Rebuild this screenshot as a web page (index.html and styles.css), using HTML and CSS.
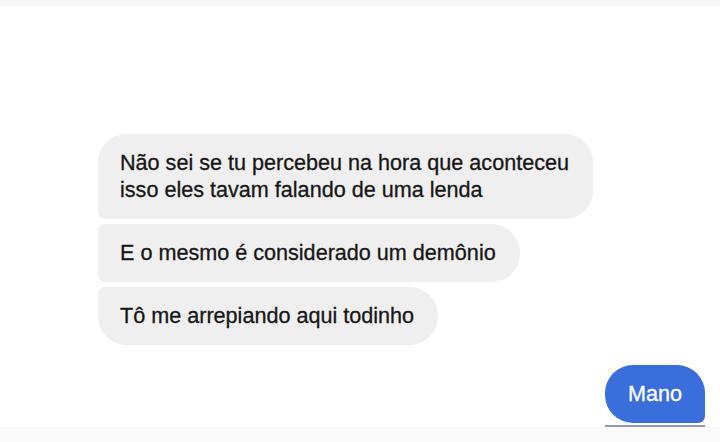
FILE: index.html
```html
<!DOCTYPE html>
<html lang="pt-BR">
<head>
    <meta charset="UTF-8">
    <meta name="viewport" content="width=device-width, initial-scale=1.0">
    <title>Conversa</title>
    <link rel="stylesheet" href="styles.css">
</head>
<body>
    <div class="top-strip"></div>

    <!-- Received messages -->
    <div class="thread">
        <div class="received">
            <div class="bubble first">Não sei se tu percebeu na hora que aconteceu<br>isso eles tavam falando de uma lenda</div>
            <div class="bubble middle">E o mesmo é considerado um demônio</div>
            <div class="bubble last">Tô me arrepiando aqui todinho</div>
        </div>

        <!-- Sent message -->
        <div class="sent">
            <div class="sent-wrap">
                <div class="bubble mine">Mano</div>
            </div>
        </div>
    </div>

    <div class="bottom-strip"></div>
</body>
</html>
```

FILE: styles.css
```css
body {
    margin: 0;
    background-color: #ffffff;
    font-family: "Liberation Sans", Arial, sans-serif;
    height: 442px;
    overflow: hidden;
}

.top-strip {
    height: 6px;
    background-color: #f7f7f7;
}

.thread {
    padding-top: 128px;
}

.received {
    display: flex;
    flex-direction: column;
    align-items: flex-start;
    gap: 5px;
    padding-left: 98px;
}

.bubble {
    background-color: #efefef;
    color: #161616;
    font-size: 21.6px;
    line-height: 27px;
    padding: 15px 24px 16px 22px;
    border-radius: 28px;
    -webkit-text-stroke: 0.3px #161616;
}

/* grouped bubbles: tight corners on the left where they touch */
.bubble.first {
    border-radius: 28px 28px 28px 7px;
}
.bubble.middle {
    border-radius: 7px 28px 28px 7px;
}
.bubble.last {
    border-radius: 7px 28px 28px 28px;
}

.sent {
    display: flex;
    justify-content: flex-end;
    padding-right: 15px;
    margin-top: 20px;
}

.sent-wrap {
    border-bottom: 2px solid #8d9cb6;
    padding-bottom: 2px;
}

.bubble.mine {
    background-color: #3a6edb;
    color: #ffffff;
    -webkit-text-stroke: 0.3px #ffffff;
    width: 100px;
    box-sizing: border-box;
    text-align: center;
    padding: 15px 0 16px 0;
    border-radius: 28px 28px 7px 28px;
}

.bottom-strip {
    height: 15px;
    background-color: #fafafa;
}
```
